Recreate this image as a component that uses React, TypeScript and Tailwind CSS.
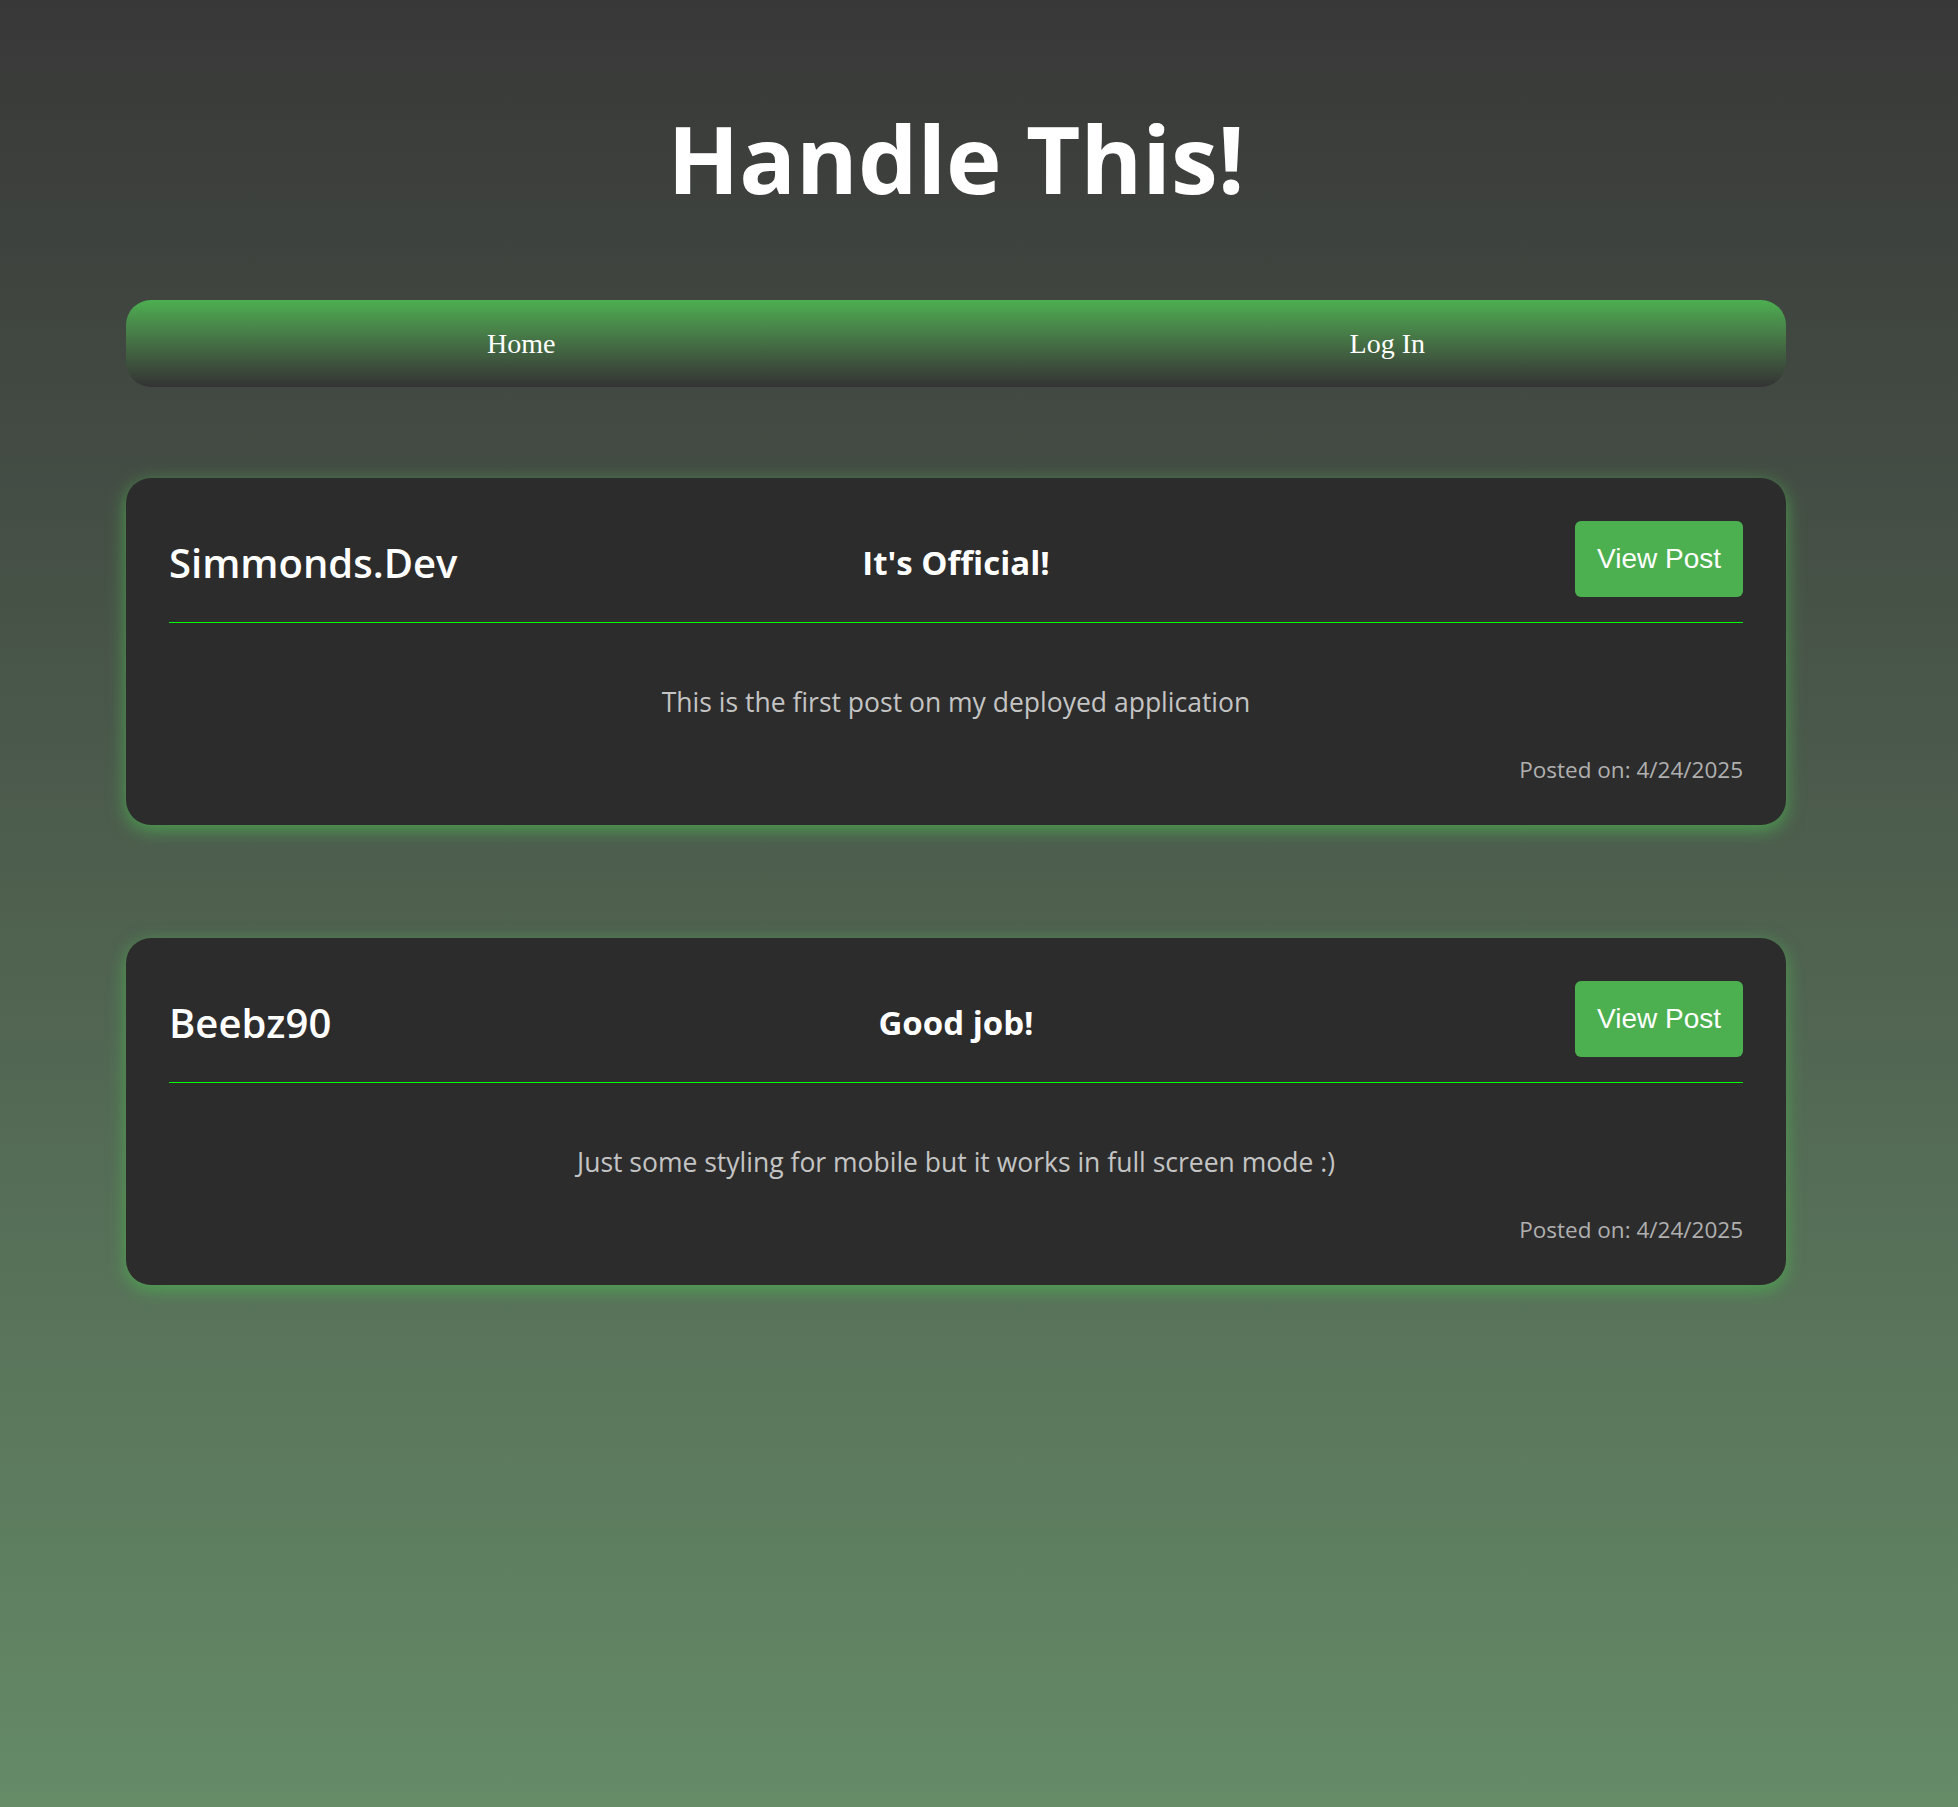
import React from 'react';

type Post = {
  author: string;
  title: string;
  body: string;
  date: string;
};

const posts: Post[] = [
  {
    author: "Simmonds.Dev",
    title: "It's Official!",
    body: "This is the first post on my deployed application",
    date: "4/24/2025",
  },
  {
    author: "Beebz90",
    title: "Good job!",
    body: "Just some styling for mobile but it works in full screen mode :)",
    date: "4/24/2025",
  },
];

const PostCard: React.FC<{ post: Post }> = ({ post }) => {
  return (
    <div className="bg-[#2c2c2c] rounded-[25px] px-[43px] pt-[43px] pb-[40px] shadow-[0_5px_18px_rgba(76,175,80,0.8)]">
      <div className="grid grid-cols-3 items-center pb-[25px] border-b border-[#00ff00]">
        <h2 className="pt-[8px] text-[40px] leading-[1.2] text-white font-semibold">{post.author}</h2>
        <h3 className="pt-[8px] text-[33px] leading-[1.2] text-white font-bold text-center">{post.title}</h3>
        <div className="flex justify-end">
          <button
            type="button"
            className="bg-[#4caf50] text-white rounded-[6px] px-[22px] h-[76px] text-[28px] font-['Liberation_Sans',Arial,sans-serif]"
          >
            View Post
          </button>
        </div>
      </div>
      <p className="mt-[61px] text-center text-[26.5px] leading-[36px] text-[#c4c4c4]">{post.body}</p>
      <p className="mt-[34px] text-right text-[22.5px] leading-[31px] text-[#b0b0b0]">Posted on: {post.date}</p>
    </div>
  );
};

const App: React.FC = () => {
  return (
    <div className="min-h-screen w-full bg-gradient-to-b from-[#383838] to-[#658b67] font-['Open_Sans','Noto_Sans',sans-serif] overflow-hidden">
      <div className="ml-[126px] w-[1660px] pt-[96px] pb-[120px]">
        <h1 className="text-center text-white font-bold text-[94px] leading-[125px]">Handle This!</h1>
        <nav className="mt-[79px] h-[87px] rounded-[25px] bg-gradient-to-b from-[#4caf50] to-[#333333] flex items-center justify-between px-[361px] font-['Liberation_Serif','Times_New_Roman',serif] text-white text-[28px]">
          <a href="#">Home</a>
          <a href="#">Log In</a>
        </nav>
        <div className="mt-[91px] flex flex-col gap-[113px]">
          {posts.map((p, i) => (
            <PostCard key={i} post={p} />
          ))}
        </div>
      </div>
    </div>
  );
};

export default App;
